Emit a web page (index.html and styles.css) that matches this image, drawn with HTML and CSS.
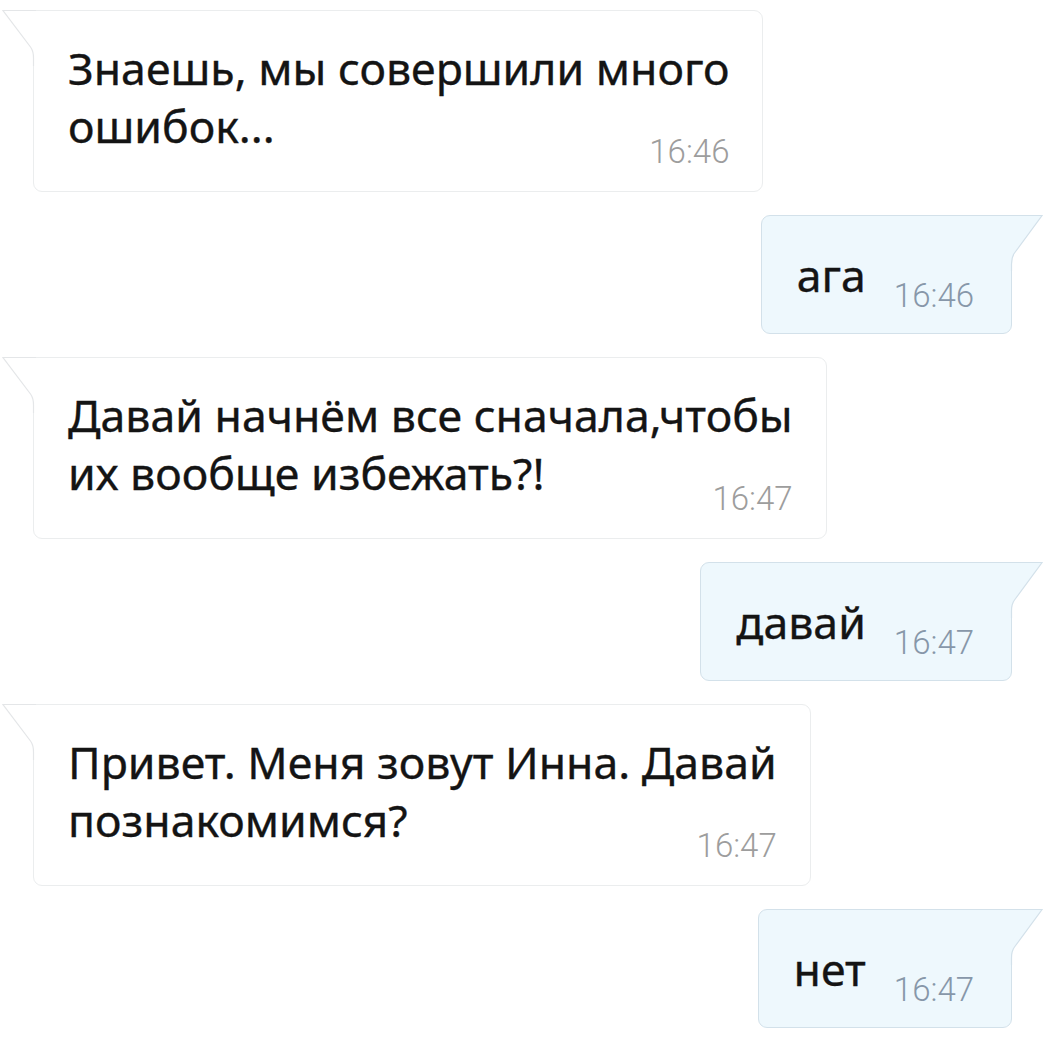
FILE: index.html
```html
<!DOCTYPE html>
<html lang="ru">
<head>
<meta charset="utf-8">
<title>Чат</title>
<link rel="stylesheet" href="styles.css">
</head>
<body>
<main class="chat">
  <div class="msg msg-in">
    <svg class="tail tail-in" width="34" height="56" viewBox="0 0 34 56" aria-hidden="true">
      <path class="tail-fill" d="M34 0 H1 L28.5 37 Q31.5 41 31.5 48 V56 H34 Z"/>
      <path class="tail-line" d="M34 0.5 H1 L28.5 37 Q31.5 41 31.5 48 V56"/>
    </svg>
    <p class="text">Знаешь, мы совершили много<br>ошибок...</p>
    <span class="time">16:46</span>
  </div>

  <div class="msg msg-out">
    <svg class="tail tail-out" width="34" height="56" viewBox="0 0 34 56" aria-hidden="true">
      <path class="tail-fill" d="M0 0 H33 L5.5 38 Q2.5 42 2.5 49 V56 H0 Z"/>
      <path class="tail-line" d="M0 0.5 H33 L5.5 38 Q2.5 42 2.5 49 V56"/>
    </svg>
    <p class="text">ага</p>
    <span class="time">16:46</span>
  </div>

  <div class="msg msg-in">
    <svg class="tail tail-in" width="34" height="56" viewBox="0 0 34 56" aria-hidden="true">
      <path class="tail-fill" d="M34 0 H1 L28.5 37 Q31.5 41 31.5 48 V56 H34 Z"/>
      <path class="tail-line" d="M34 0.5 H1 L28.5 37 Q31.5 41 31.5 48 V56"/>
    </svg>
    <p class="text">Давай начнём все сначала,чтобы<br>их вообще избежать?!</p>
    <span class="time">16:47</span>
  </div>

  <div class="msg msg-out">
    <svg class="tail tail-out" width="34" height="56" viewBox="0 0 34 56" aria-hidden="true">
      <path class="tail-fill" d="M0 0 H33 L5.5 38 Q2.5 42 2.5 49 V56 H0 Z"/>
      <path class="tail-line" d="M0 0.5 H33 L5.5 38 Q2.5 42 2.5 49 V56"/>
    </svg>
    <p class="text">давай</p>
    <span class="time">16:47</span>
  </div>

  <div class="msg msg-in">
    <svg class="tail tail-in" width="34" height="56" viewBox="0 0 34 56" aria-hidden="true">
      <path class="tail-fill" d="M34 0 H1 L28.5 37 Q31.5 41 31.5 48 V56 H34 Z"/>
      <path class="tail-line" d="M34 0.5 H1 L28.5 37 Q31.5 41 31.5 48 V56"/>
    </svg>
    <p class="text">Привет. Меня зовут Инна. Давай<br>познакомимся?</p>
    <span class="time">16:47</span>
  </div>

  <div class="msg msg-out">
    <svg class="tail tail-out" width="34" height="56" viewBox="0 0 34 56" aria-hidden="true">
      <path class="tail-fill" d="M0 0 H33 L5.5 38 Q2.5 42 2.5 49 V56 H0 Z"/>
      <path class="tail-line" d="M0 0.5 H33 L5.5 38 Q2.5 42 2.5 49 V56"/>
    </svg>
    <p class="text">нет</p>
    <span class="time">16:47</span>
  </div>
</main>
</body>
</html>
```

FILE: styles.css
```css
html, body {
  margin: 0;
  padding: 0;
  background: #ffffff;
}

body {
  font-family: "Noto Sans", "Open Sans", "DejaVu Sans", sans-serif;
  color: #141414;
}

.chat {
  display: flex;
  flex-direction: column;
  gap: 23px;
  padding: 10px 51px 0 33px;
}

.msg {
  position: relative;
  box-sizing: border-box;
  border: 1px solid;
  border-radius: 9px;
}

.text {
  margin: 0;
  font-size: 44.6px;
  line-height: 58px;
  white-space: nowrap;
  -webkit-text-stroke: 0.35px currentColor;
}

.time {
  display: block;
  font-family: Roboto, "Noto Sans", sans-serif;
  font-weight: 300;
  font-size: 33px;
  line-height: 36px;
  white-space: nowrap;
}

/* incoming */
.msg-in {
  align-self: flex-start;
  height: 182px;
  padding: 28px 33px 0 34px;
  background: #ffffff;
  border-color: #ebedee;
  border-top-left-radius: 0;
}

.msg-in .time {
  text-align: right;
  margin-top: -21px;
  color: #9d9d9d;
}

/* outgoing */
.msg-out {
  align-self: flex-end;
  display: flex;
  align-items: flex-start;
  gap: 28px;
  height: 119px;
  padding: 30px 37px 0 35px;
  background: #eef8fd;
  border-color: #d3e1ea;
  border-top-right-radius: 0;
}

.msg-out .time {
  margin-top: 32px;
  color: #8797a9;
}

/* tails */
.tail {
  position: absolute;
  top: -1px;
  overflow: visible;
}

.tail-in {
  left: -32px;
}

.tail-out {
  right: -32px;
}

.tail-in .tail-fill {
  fill: #ffffff;
}

.tail-in .tail-line {
  fill: none;
  stroke: #e4e6e8;
  stroke-width: 1.2;
}

.tail-out .tail-fill {
  fill: #eef8fd;
}

.tail-out .tail-line {
  fill: none;
  stroke: #d3e1ea;
  stroke-width: 1.2;
}
```
